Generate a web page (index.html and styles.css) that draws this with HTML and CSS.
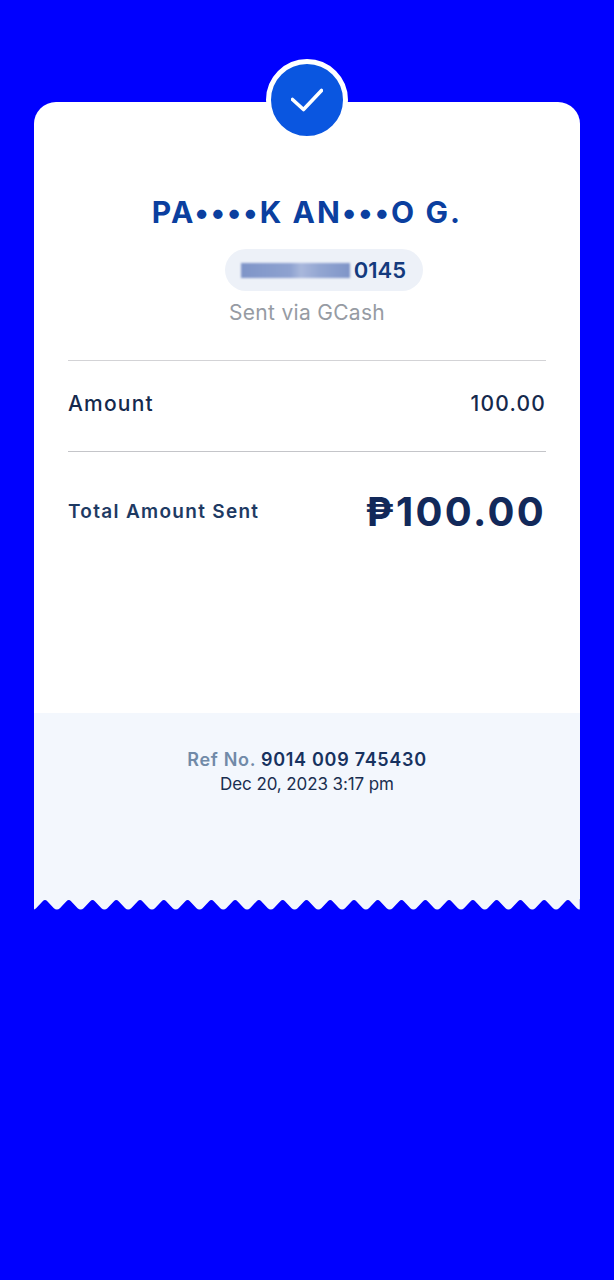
FILE: index.html
```html
<!DOCTYPE html>
<html lang="en">

<head>
    <meta charset="UTF-8">
    <meta name="viewport" content="width=device-width, initial-scale=1.0">
    <title>Sent via GCash</title>
    <link rel="stylesheet" href="styles.css">
</head>

<body>
    <div class="receipt">
        <div class="check-badge">
            <svg width="32" height="26" viewBox="0 0 32 26">
                <path d="M1.5 12.5 L12.5 22.5 L30.5 3.5" fill="none" stroke="#fff" stroke-width="3.6" stroke-linecap="round" stroke-linejoin="round"/>
            </svg>
        </div>

        <div class="receipt-main">
            <div class="name">PA••••K AN•••O G.</div>
            <div class="phone-pill">
                <span class="phone-blur"></span>
                <span class="phone-last">0145</span>
            </div>
            <div class="sent-via">Sent via GCash</div>

            <div class="amount-row">
                <span>Amount</span>
                <span>100.00</span>
            </div>

            <div class="total-row">
                <span class="total-label">Total Amount Sent</span>
                <span class="total-value">₱100.00</span>
            </div>
        </div>

        <div class="receipt-footer">
            <div class="ref"><span class="ref-label">Ref No.</span> 9014 009 745430</div>
            <div class="date">Dec 20, 2023 3:17 pm</div>
        </div>

        <!-- torn paper edge, 23 teeth -->
        <svg class="torn-edge" width="546" height="11" viewBox="0 0 546 11">
            <path fill="#f3f7fd" d="M-0.9 0 V10.6
                q1.6 0 3 -1.4 l6.6 -7 q2.3 -2.2 4.6 0 l6.6 7 q1.4 1.4 2.97 1.4
                q1.6 0 3 -1.4 l6.6 -7 q2.3 -2.2 4.6 0 l6.6 7 q1.4 1.4 2.97 1.4
                q1.6 0 3 -1.4 l6.6 -7 q2.3 -2.2 4.6 0 l6.6 7 q1.4 1.4 2.97 1.4
                q1.6 0 3 -1.4 l6.6 -7 q2.3 -2.2 4.6 0 l6.6 7 q1.4 1.4 2.97 1.4
                q1.6 0 3 -1.4 l6.6 -7 q2.3 -2.2 4.6 0 l6.6 7 q1.4 1.4 2.97 1.4
                q1.6 0 3 -1.4 l6.6 -7 q2.3 -2.2 4.6 0 l6.6 7 q1.4 1.4 2.97 1.4
                q1.6 0 3 -1.4 l6.6 -7 q2.3 -2.2 4.6 0 l6.6 7 q1.4 1.4 2.97 1.4
                q1.6 0 3 -1.4 l6.6 -7 q2.3 -2.2 4.6 0 l6.6 7 q1.4 1.4 2.97 1.4
                q1.6 0 3 -1.4 l6.6 -7 q2.3 -2.2 4.6 0 l6.6 7 q1.4 1.4 2.97 1.4
                q1.6 0 3 -1.4 l6.6 -7 q2.3 -2.2 4.6 0 l6.6 7 q1.4 1.4 2.97 1.4
                q1.6 0 3 -1.4 l6.6 -7 q2.3 -2.2 4.6 0 l6.6 7 q1.4 1.4 2.97 1.4
                q1.6 0 3 -1.4 l6.6 -7 q2.3 -2.2 4.6 0 l6.6 7 q1.4 1.4 2.97 1.4
                q1.6 0 3 -1.4 l6.6 -7 q2.3 -2.2 4.6 0 l6.6 7 q1.4 1.4 2.97 1.4
                q1.6 0 3 -1.4 l6.6 -7 q2.3 -2.2 4.6 0 l6.6 7 q1.4 1.4 2.97 1.4
                q1.6 0 3 -1.4 l6.6 -7 q2.3 -2.2 4.6 0 l6.6 7 q1.4 1.4 2.97 1.4
                q1.6 0 3 -1.4 l6.6 -7 q2.3 -2.2 4.6 0 l6.6 7 q1.4 1.4 2.97 1.4
                q1.6 0 3 -1.4 l6.6 -7 q2.3 -2.2 4.6 0 l6.6 7 q1.4 1.4 2.97 1.4
                q1.6 0 3 -1.4 l6.6 -7 q2.3 -2.2 4.6 0 l6.6 7 q1.4 1.4 2.97 1.4
                q1.6 0 3 -1.4 l6.6 -7 q2.3 -2.2 4.6 0 l6.6 7 q1.4 1.4 2.97 1.4
                q1.6 0 3 -1.4 l6.6 -7 q2.3 -2.2 4.6 0 l6.6 7 q1.4 1.4 2.97 1.4
                q1.6 0 3 -1.4 l6.6 -7 q2.3 -2.2 4.6 0 l6.6 7 q1.4 1.4 2.97 1.4
                q1.6 0 3 -1.4 l6.6 -7 q2.3 -2.2 4.6 0 l6.6 7 q1.4 1.4 2.97 1.4
                q1.6 0 3 -1.4 l6.6 -7 q2.3 -2.2 4.6 0 l6.6 7 q1.4 1.4 2.97 1.4
                V0 Z"/>
        </svg>
    </div>
</body>

</html>
```

FILE: styles.css
```css
body {
    margin: 0;
    padding: 102px 34px 0;
    height: 1280px;
    box-sizing: border-box;
    background: #0000ff;
    font-family: 'Inter', sans-serif;
    color: #14305f;
    overflow: hidden;
}

.receipt {
    position: relative;
    width: 546px;
}

.check-badge {
    position: absolute;
    top: -43px;
    left: 232px;
    width: 72px;
    height: 72px;
    border: 5px solid #fff;
    border-radius: 50%;
    background: #0a56e0;
    display: flex;
    justify-content: center;
    align-items: center;
}

.receipt-main {
    height: 611px;
    box-sizing: border-box;
    padding: 92px 34px 0;
    background: #fff;
    border-radius: 22px 22px 0 0;
    display: flex;
    flex-direction: column;
}

.name {
    font-size: 30px;
    font-weight: 700;
    line-height: 36px;
    letter-spacing: 2.1px;
    text-align: center;
    color: #0b3f9f;
    white-space: nowrap;
}

.phone-pill {
    align-self: center;
    width: 198px;
    height: 42px;
    margin-top: 19px;
    margin-left: 34px;
    box-sizing: border-box;
    padding-right: 17px;
    border-radius: 21px;
    background: #edf1f8;
    display: flex;
    justify-content: flex-end;
    align-items: center;
    gap: 4px;
    overflow: hidden;
}

.phone-blur {
    width: 109px;
    height: 15px;
    background: linear-gradient(90deg, #7f95c8 0%, #8ea2d0 45%, #a9b8dc 55%, #93a6d2 72%, #7f95c8 100%);
    filter: blur(1px);
}

.phone-last {
    font-size: 22px;
    font-weight: 600;
    color: #143a7d;
}

.sent-via {
    margin-top: 8px;
    font-size: 21px;
    line-height: 28px;
    letter-spacing: 0.3px;
    text-align: center;
    color: #969ba3;
}

.amount-row {
    height: 92px;
    box-sizing: border-box;
    margin-top: 33px;
    padding-bottom: 6px;
    border-top: 1px solid #d3d3d6;
    border-bottom: 1px solid #c4c5c9;
    display: flex;
    justify-content: space-between;
    align-items: center;
    font-size: 21px;
    font-weight: 500;
    letter-spacing: 1.2px;
    color: #15294d;
}

.total-row {
    margin-top: 35px;
    display: flex;
    justify-content: space-between;
    align-items: center;
}

.total-label {
    font-size: 19px;
    font-weight: 600;
    letter-spacing: 1.3px;
    color: #1e3a63;
}

.total-value {
    font-size: 40px;
    font-weight: 700;
    letter-spacing: 2.3px;
    color: #12295a;
}

.receipt-footer {
    height: 186px;
    box-sizing: border-box;
    padding-top: 34px;
    background: #f3f7fd;
    text-align: center;
}

.ref {
    font-size: 18px;
    font-weight: 600;
    line-height: 25px;
    letter-spacing: 0.7px;
    color: #17325f;
}

.ref-label {
    color: #718aa8;
}

.date {
    font-size: 17px;
    line-height: 25px;
    letter-spacing: -0.1px;
    color: #1a2e50;
}

.torn-edge {
    display: block;
}
```
